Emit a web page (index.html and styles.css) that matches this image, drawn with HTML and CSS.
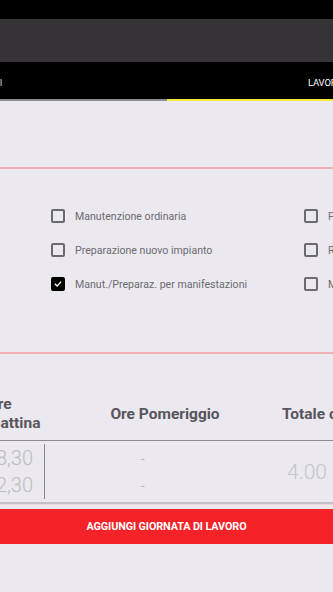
FILE: index.html
```html
<!DOCTYPE html>
<html>
<head>
<meta charset="utf-8">
<link rel="stylesheet" href="styles.css">
</head>
<body>
<div class="status"></div>
<div class="toolbar"></div>
<div class="tabs">
  <div class="tab tab-left"><span class="tab-label first">ORARI</span></div>
  <div class="tab tab-right"><span class="tab-label">LAVORO</span></div>
</div>
<div class="indicator">
  <div class="ind-left"></div>
  <div class="ind-right"></div>
</div>
<div class="top-space"></div>
<div class="rule"></div>
<div class="checks">
  <div class="check-col">
    <label class="check"><span class="box"></span><span class="lbl">Manutenzione ordinaria</span></label>
    <label class="check"><span class="box"></span><span class="lbl">Preparazione nuovo impianto</span></label>
    <label class="check"><span class="box checked"><svg viewBox="0 0 14 14" width="14" height="14"><path d="M3.2 7.3 L5.8 9.8 L10.8 4.4" fill="none" stroke="#fff" stroke-width="1.8" stroke-linecap="square"/></svg></span><span class="lbl">Manut./Preparaz. per manifestazioni</span></label>
  </div>
  <div class="check-col">
    <label class="check"><span class="box"></span><span class="lbl">Pulizia</span></label>
    <label class="check"><span class="box"></span><span class="lbl">Riparazione</span></label>
    <label class="check"><span class="box"></span><span class="lbl">Montaggio</span></label>
  </div>
</div>
<div class="rule rule2"></div>
<div class="table">
  <div class="thead">
    <div class="c1 th th-left">Ore<br>Mattina</div>
    <div class="c2 th">Ore Pomeriggio</div>
    <div class="c3 th th-tot">Totale ore</div>
  </div>
  <div class="trow">
    <div class="c1 vals"><span>8,30</span><span>12,30</span></div>
    <div class="c2 dashes"><span>-</span><span>-</span></div>
    <div class="c3 total">4.00</div>
  </div>
</div>
<div class="pinkgap"></div>
<div class="button">AGGIUNGI GIORNATA DI LAVORO</div>
</body>
</html>
```

FILE: styles.css
```css
html, body {
  margin: 0;
  padding: 0;
}
body {
  width: 333px;
  height: 592px;
  overflow: hidden;
  background: #ebe8ef;
  font-family: Roboto, "Liberation Sans", sans-serif;
}
.status {
  height: 19px;
  background: #000;
}
.toolbar {
  height: 43px;
  background: #353336;
}
.tabs {
  height: 37px;
  background: #000;
  display: flex;
  align-items: center;
}
.tab {
  height: 100%;
  display: flex;
  align-items: center;
  overflow: hidden;
  white-space: nowrap;
  padding-top: 3px;
  box-sizing: border-box;
}
.tab-left {
  flex: 0 0 167px;
}
.tab-right {
  flex: 1 1 auto;
  padding-left: 141px;
}
.tab-label {
  color: #fff;
  font-size: 9.5px;
  letter-spacing: -0.2px;
}
.tab-label.first {
  margin-left: -24px;
  color: #cfcfcf;
}
.indicator {
  display: flex;
  height: 2px;
}
.ind-left {
  flex: 0 0 167px;
  background: #8d8a92;
}
.ind-right {
  flex: 1 1 auto;
  background: #f4ec3c;
}
.top-space {
  height: 66px;
}
.rule {
  height: 2px;
  background: #efb0b5;
}
.checks {
  display: flex;
  padding: 30px 0 0 51px;
  height: 183px;
  box-sizing: border-box;
}
.check-col {
  flex: 0 0 253px;
  display: flex;
  flex-direction: column;
}
.check {
  display: flex;
  align-items: center;
  height: 34px;
  white-space: nowrap;
}
.box {
  width: 14px;
  height: 14px;
  box-sizing: border-box;
  border: 2px solid #6b6a6e;
  border-radius: 2px;
  flex: 0 0 14px;
  display: flex;
  align-items: center;
  justify-content: center;
}
.box.checked {
  background: #000;
  border-color: #000;
}
.box svg {
  display: block;
}
.lbl {
  margin-left: 10px;
  font-size: 10.6px;
  color: #6c6b70;
}
.table {
  margin-top: 34px;
  margin-left: -60px;
  width: 460px;
}
.thead {
  display: flex;
  align-items: center;
  height: 52px;
  border-bottom: 1.5px solid #8e8c92;
}
.c1 {
  flex: 0 0 105px;
  box-sizing: border-box;
}
.c2 {
  flex: 0 0 240px;
  box-sizing: border-box;
}
.c3 {
  flex: 1 1 auto;
}
.th {
  font-weight: bold;
  font-size: 15.5px;
  color: #58565c;
  line-height: 19px;
}
.th-left {
  padding-left: 47px;
}
.c2.th {
  text-align: center;
}
.th-tot {
  margin-left: -3px;
}
.trow {
  display: flex;
  height: 61px;
  border-bottom: 2px solid #c3c1c7;
}
.vals {
  border-right: 1.5px solid #8b898f;
  margin: 3px 0 3px;
  display: flex;
  flex-direction: column;
  align-items: flex-end;
  justify-content: center;
  padding-right: 11px;
  font-size: 20px;
  line-height: 27px;
  color: #bdbcc0;
  font-weight: 300;
}
.dashes {
  display: flex;
  flex-direction: column;
  justify-content: center;
  padding-left: 96px;
  color: #b6b5b9;
  font-size: 13px;
  line-height: 27px;
}
.total {
  display: flex;
  align-items: center;
  padding-left: 2px;
  font-size: 21px;
  color: #c5c4c8;
  font-weight: 300;
}
.pinkgap {
  height: 4px;
  border-top: 1px solid #efd9df;
}
.button {
  height: 35px;
  background: #f52228;
  color: #fff;
  font-weight: bold;
  font-size: 10.8px;
  display: flex;
  align-items: center;
  justify-content: center;
  letter-spacing: -0.1px;
}
```
